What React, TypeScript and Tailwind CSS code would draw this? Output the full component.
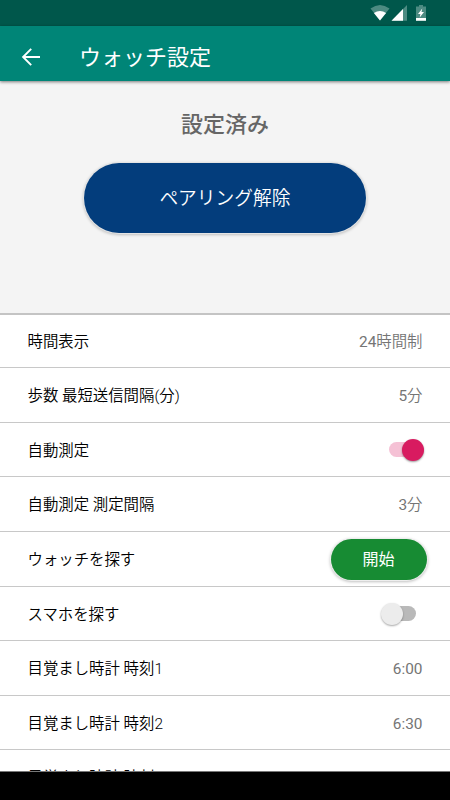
import React from "react";

type RowProps = { label: string; height: string; children?: React.ReactNode };

function Row({ label, height, children }: RowProps) {
  return (
    <div className={`flex shrink-0 items-center justify-between border-b border-[#c8c8c8] pl-[27.5px] ${height}`}>
      <span className="whitespace-nowrap pt-[2px] text-[15.4px] font-[350] leading-6 text-black">{label}</span>
      {children}
    </div>
  );
}

function Value({ children }: { children: React.ReactNode }) {
  return <span className="mr-[27.5px] whitespace-nowrap pt-[2px] font-['Roboto','Noto_Sans_CJK_JP_DemiLight','Noto_Sans_CJK_JP',sans-serif] text-[15.4px] leading-6 text-[#757575]">{children}</span>;
}

function StatusIcons() {
  return (
    <svg width="60" height="22" viewBox="0 0 60 22" className="mr-[20px]">
      <path d="M0.5 8.6Q10 1.5 19.5 8.6L10 20.6Z" fill="#4d8b82" />
      <path d="M3.9 13Q10 8.9 16.1 13L10 20.6Z" fill="#fff" />
      <path d="M21.5 20.8L37 5V20.8Z" fill="#4d8b82" />
      <path d="M21.5 20.8L33 9V20.8Z" fill="#fff" />
      <path d="M46 6.4H49V5H53V6.4H56V18H46Z" fill="#4d8b82" />
      <path d="M46 18H56V20.8H46Z" fill="#fff" />
      <path d="M52.3 8.4L48 14H50.4L49.7 17.6L54 12H51.5Z" fill="#fff" />
    </svg>
  );
}

export default function App() {
  return (
    <div className="flex h-[800px] w-[450px] flex-col overflow-hidden bg-white font-['Roboto','Noto_Sans_CJK_JP',sans-serif]">
      <div className="flex h-[26px] shrink-0 items-start justify-end bg-[#00574b]">
        <StatusIcons />
      </div>
      <header className="z-10 flex h-[55px] shrink-0 items-center bg-[#008577] shadow-[0_1px_3px_rgba(0,0,0,0.5)]">
        <svg width="20" height="20" viewBox="0 0 20 20" className="ml-[20.5px] mt-[7px]" fill="none" stroke="#fff" strokeWidth="1.9">
          <path d="M19 10H2.5M10.2 1.9L2.1 10L10.2 18.1" />
        </svg>
        <h1 className="ml-[38.5px] mt-[8px] text-[22px] font-normal leading-8 text-white">ウォッチ設定</h1>
      </header>
      <section className="flex h-[232px] shrink-0 flex-col items-center bg-[#f4f4f4]">
        <h2 className="mt-[28px] text-[22px] font-medium leading-8 text-[#666]">設定済み</h2>
        <button className="mt-[22px] h-[70px] w-[282px] rounded-[35px] bg-[#033d7c] pt-[2px] text-[18.75px] font-[350] text-white shadow-[0_0_0_1px_#e4e4e4,0_1px_3px_1px_rgba(0,0,0,0.22)]">
          ペアリング解除
        </button>
      </section>
      <main className="flex min-h-0 flex-1 flex-col overflow-hidden border-t-2 border-[#c4c4c4] bg-white">
        <Row label="時間表示" height="h-[53px]"><Value>24時間制</Value></Row>
        <Row label="歩数 最短送信間隔(分)" height="h-[55px]"><Value>5分</Value></Row>
        <Row label="自動測定" height="h-[54px]">
          <div className="mr-[26px] flex h-[22px] w-[35px] items-center justify-end rounded-full">
            <div className="-mr-3 h-[15px] w-[26px] rounded-full bg-[#f5c1d5]" />
            <div className="z-10 size-[22px] rounded-full bg-[#d81b60] shadow-[0_1px_2px_rgba(0,0,0,0.4)]" />
          </div>
        </Row>
        <Row label="自動測定 測定間隔" height="h-[55px]"><Value>3分</Value></Row>
        <Row label="ウォッチを探す" height="h-[55px]">
          <button className="mr-[23.5px] h-[41px] w-[96px] rounded-[20.5px] bg-[#178b33] pt-[2px] text-[16px] text-white shadow-[0_0_0_1px_#eee,0_1px_3px_1px_rgba(0,0,0,0.25)]">開始</button>
        </Row>
        <Row label="スマホを探す" height="h-[54px]">
          <div className="mr-[34px] flex h-[22px] w-[35px] items-center">
            <div className="z-10 size-[22px] shrink-0 rounded-full bg-[#ececec] shadow-[0_1px_2px_rgba(0,0,0,0.35)]" />
            <div className="-ml-3 h-[15px] w-[25px] shrink-0 rounded-full bg-[#b9b9b9]" />
          </div>
        </Row>
        <Row label="目覚まし時計 時刻1" height="h-[55px]"><Value>6:00</Value></Row>
        <Row label="目覚まし時計 時刻2" height="h-[54px]"><Value>6:30</Value></Row>
        <Row label="目覚まし時計 時刻3" height="h-[54px]" />
      </main>
      <footer className="h-[29px] shrink-0 border-t border-[#777] bg-black" />
    </div>
  );
}
